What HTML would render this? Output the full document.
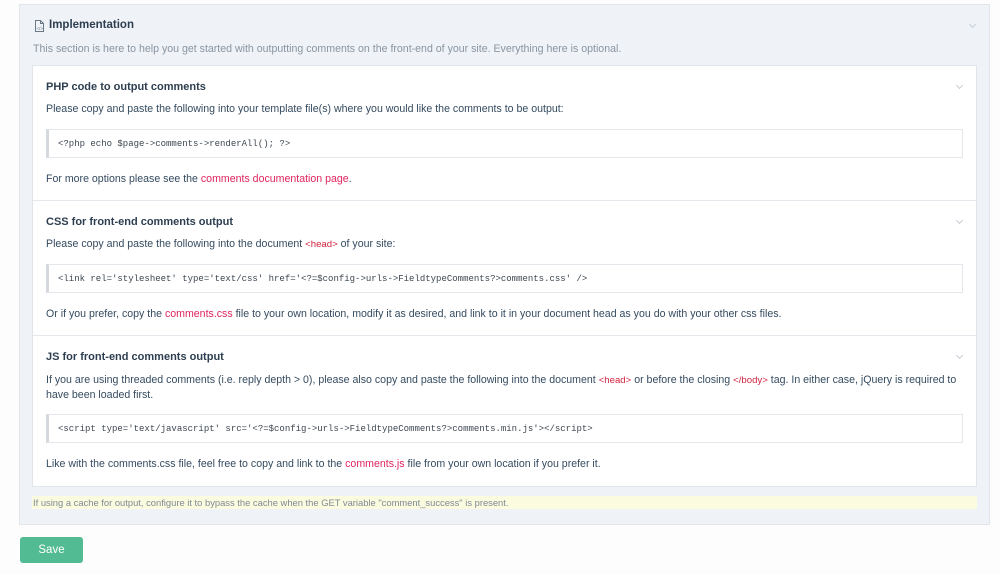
<!DOCTYPE html>
<html><head><meta charset="utf-8"><style>
*{margin:0;padding:0;box-sizing:border-box}
body{width:1000px;height:574px;background:#fdfdfd;font-family:"Liberation Sans",sans-serif;color:#354b60;font-size:10.6px;position:relative;overflow:hidden}
.a{position:absolute;white-space:nowrap}
.outer{position:absolute;left:19px;top:4px;width:971px;height:521px;background:#eff2f6;border:1px solid #e1e5ea}
.inner{position:absolute;left:32px;top:65px;width:945px;height:422px;background:#fff;border:1px solid #e1e5ea}
.sep{position:absolute;left:33px;width:943px;height:1px;background:#e5e8ec}
.code{position:absolute;left:46px;width:917px;height:29px;background:#fff;border:1px solid #e3e7ec;border-left:3px solid #d5d9de;font-family:"Liberation Mono",monospace;font-size:9px;color:#3d4650;padding:9px 0 0 9px;white-space:nowrap}
h3{font-size:11px;font-weight:bold;color:#2d3e50}
.r{color:#e0245e}
.t{color:#d0233f;font-size:9.6px}
.chev{position:absolute;width:5px;height:5px;border-right:1px solid #c5ccd4;border-bottom:1px solid #c5ccd4;transform:rotate(45deg)}
</style></head><body>
<div class="outer"></div>
<svg class="a" style="left:34px;top:20px" width="11" height="12" viewBox="0 0 11 12"><path d="M1.5 .5h5l3 3v8h-8z M6.5 .5v3h3" fill="none" stroke="#6b7886" stroke-width="1"/><text x="2.5" y="10" font-size="4.5" fill="#6b7886" font-family="Liberation Sans">&lt;/&gt;</text></svg>
<div class="a" style="left:49px;top:19px"><h3 style="font-size:11.5px">Implementation</h3></div>
<div class="chev" style="left:970px;top:22px"></div>
<div class="a" style="left:33px;top:43px;color:#8995a1;font-size:10.6px">This section is here to help you get started with outputting comments on the front-end of your site. Everything here is optional.</div>
<div class="inner"></div>
<div class="sep" style="top:200px"></div>
<div class="sep" style="top:335px"></div>

<div class="a" style="left:46px;top:81px"><h3>PHP code to output comments</h3></div>
<div class="chev" style="left:957px;top:83px"></div>
<div class="a" style="left:46px;top:103px">Please copy and paste the following into your template file(s) where you would like the comments to be output:</div>
<div class="code" style="top:129px">&lt;?php echo $page-&gt;comments-&gt;renderAll(); ?&gt;</div>
<div class="a" style="left:46px;top:173px">For more options please see the <span class="r">comments documentation page</span>.</div>

<div class="a" style="left:46px;top:216px"><h3>CSS for front-end comments output</h3></div>
<div class="chev" style="left:957px;top:218px"></div>
<div class="a" style="left:46px;top:238px">Please copy and paste the following into the document <span class="t">&lt;head&gt;</span> of your site:</div>
<div class="code" style="top:264px">&lt;link rel='stylesheet' type='text/css' href='&lt;?=$config-&gt;urls-&gt;FieldtypeComments?&gt;comments.css' /&gt;</div>
<div class="a" style="left:46px;top:308px">Or if you prefer, copy the <span class="r">comments.css</span> file to your own location, modify it as desired, and link to it in your document head as you do with your other css files.</div>

<div class="a" style="left:46px;top:351px"><h3>JS for front-end comments output</h3></div>
<div class="chev" style="left:957px;top:353px"></div>
<div class="a" style="left:46px;top:374px">If you are using threaded comments (i.e. reply depth &gt; 0), please also copy and paste the following into the document <span class="t">&lt;head&gt;</span> or before the closing <span class="t">&lt;/body&gt;</span> tag. In either case, jQuery is required to</div>
<div class="a" style="left:46px;top:389px">have been loaded first.</div>
<div class="code" style="top:414px">&lt;script type='text/javascript' src='&lt;?=$config-&gt;urls-&gt;FieldtypeComments?&gt;comments.min.js'&gt;&lt;/script&gt;</div>
<div class="a" style="left:46px;top:458px">Like with the comments.css file, feel free to copy and link to the <span class="r">comments.js</span> file from your own location if you prefer it.</div>

<div class="a" style="left:32px;top:496px;width:945px;height:13px;background:#fbfbdf"></div>
<div class="a" style="left:33px;top:497px;font-size:9.4px;color:#7f8a95">If using a cache for output, configure it to bypass the cache when the GET variable "comment_success" is present.</div>

<div class="a" style="left:20px;top:537px;width:63px;height:26px;background:#52bb93;border-radius:3px;color:#fff;font-size:11.5px;text-align:center;line-height:26px">Save</div>
</body></html>
